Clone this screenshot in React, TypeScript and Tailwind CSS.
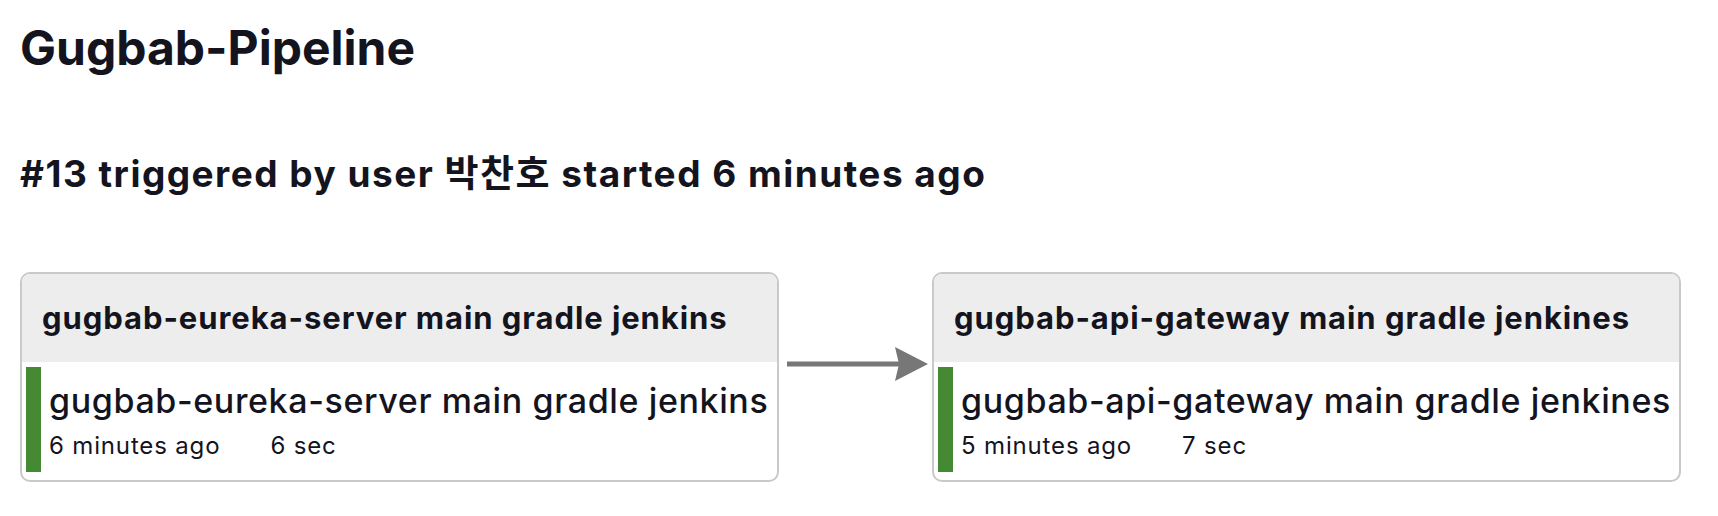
import React from "react";

interface Stage {
  name: string;
  ago: string;
  duration: string;
  width: string;
}

const stages: Stage[] = [
  {
    name: "gugbab-eureka-server main gradle jenkins",
    ago: "6 minutes ago",
    duration: "6 sec",
    width: "w-[759px]",
  },
  {
    name: "gugbab-api-gateway main gradle jenkines",
    ago: "5 minutes ago",
    duration: "7 sec",
    width: "w-[749px]",
  },
];

function StageCard({ stage }: { stage: Stage }) {
  return (
    <div
      className={`${stage.width} shrink-0 overflow-hidden rounded-[10px] border-2 border-[#c9c9c9] bg-white`}
    >
      <div className="flex h-[88px] items-center bg-[#ededed] pl-[20px]">
        <span className="whitespace-nowrap text-[31px] font-bold leading-[36px] tracking-[0.03em]">
          {stage.name}
        </span>
      </div>
      <div className="flex pb-[8px] pl-[4px] pt-[5px]">
        <div className="w-[15px] shrink-0 bg-[#458a33]" />
        <div className="flex flex-col pl-[8px] pt-[14px] pb-[12px]">
          <span className="whitespace-nowrap text-[34px] font-medium leading-[40px] tracking-[0.018em]">
            {stage.name}
          </span>
          <div className="mt-[11px] flex text-[24px] leading-[28px] tracking-[0.035em]">
            <span>{stage.ago}</span>
            <span className="ml-[50px]">{stage.duration}</span>
          </div>
        </div>
      </div>
    </div>
  );
}

function Arrow() {
  return (
    <svg
      width="141"
      height="34"
      viewBox="0 0 141 34"
      className="mt-[75px] ml-[8px] mr-[4px] shrink-0"
    >
      <rect x="0" y="14.5" width="112" height="5" fill="#777777" />
      <polygon points="108,0 141,17 108,34 112,17" fill="#777777" />
    </svg>
  );
}

export default function App() {
  return (
    <div className="h-[516px] w-[1718px] bg-white px-[20px] text-[#14141f] font-['Inter','Noto_Sans_CJK_KR',sans-serif]">
      <h1 className="pt-[18px] text-[48px] font-bold leading-[60px]">
        Gugbab-Pipeline
      </h1>
      <h2 className="mt-[74px] text-[37px] font-bold leading-[44px] tracking-[0.04em]">
        #13 triggered by user 박찬호 started 6 minutes ago
      </h2>
      <div className="mt-[76px] flex items-start">
        <StageCard stage={stages[0]} />
        <Arrow />
        <StageCard stage={stages[1]} />
      </div>
    </div>
  );
}
